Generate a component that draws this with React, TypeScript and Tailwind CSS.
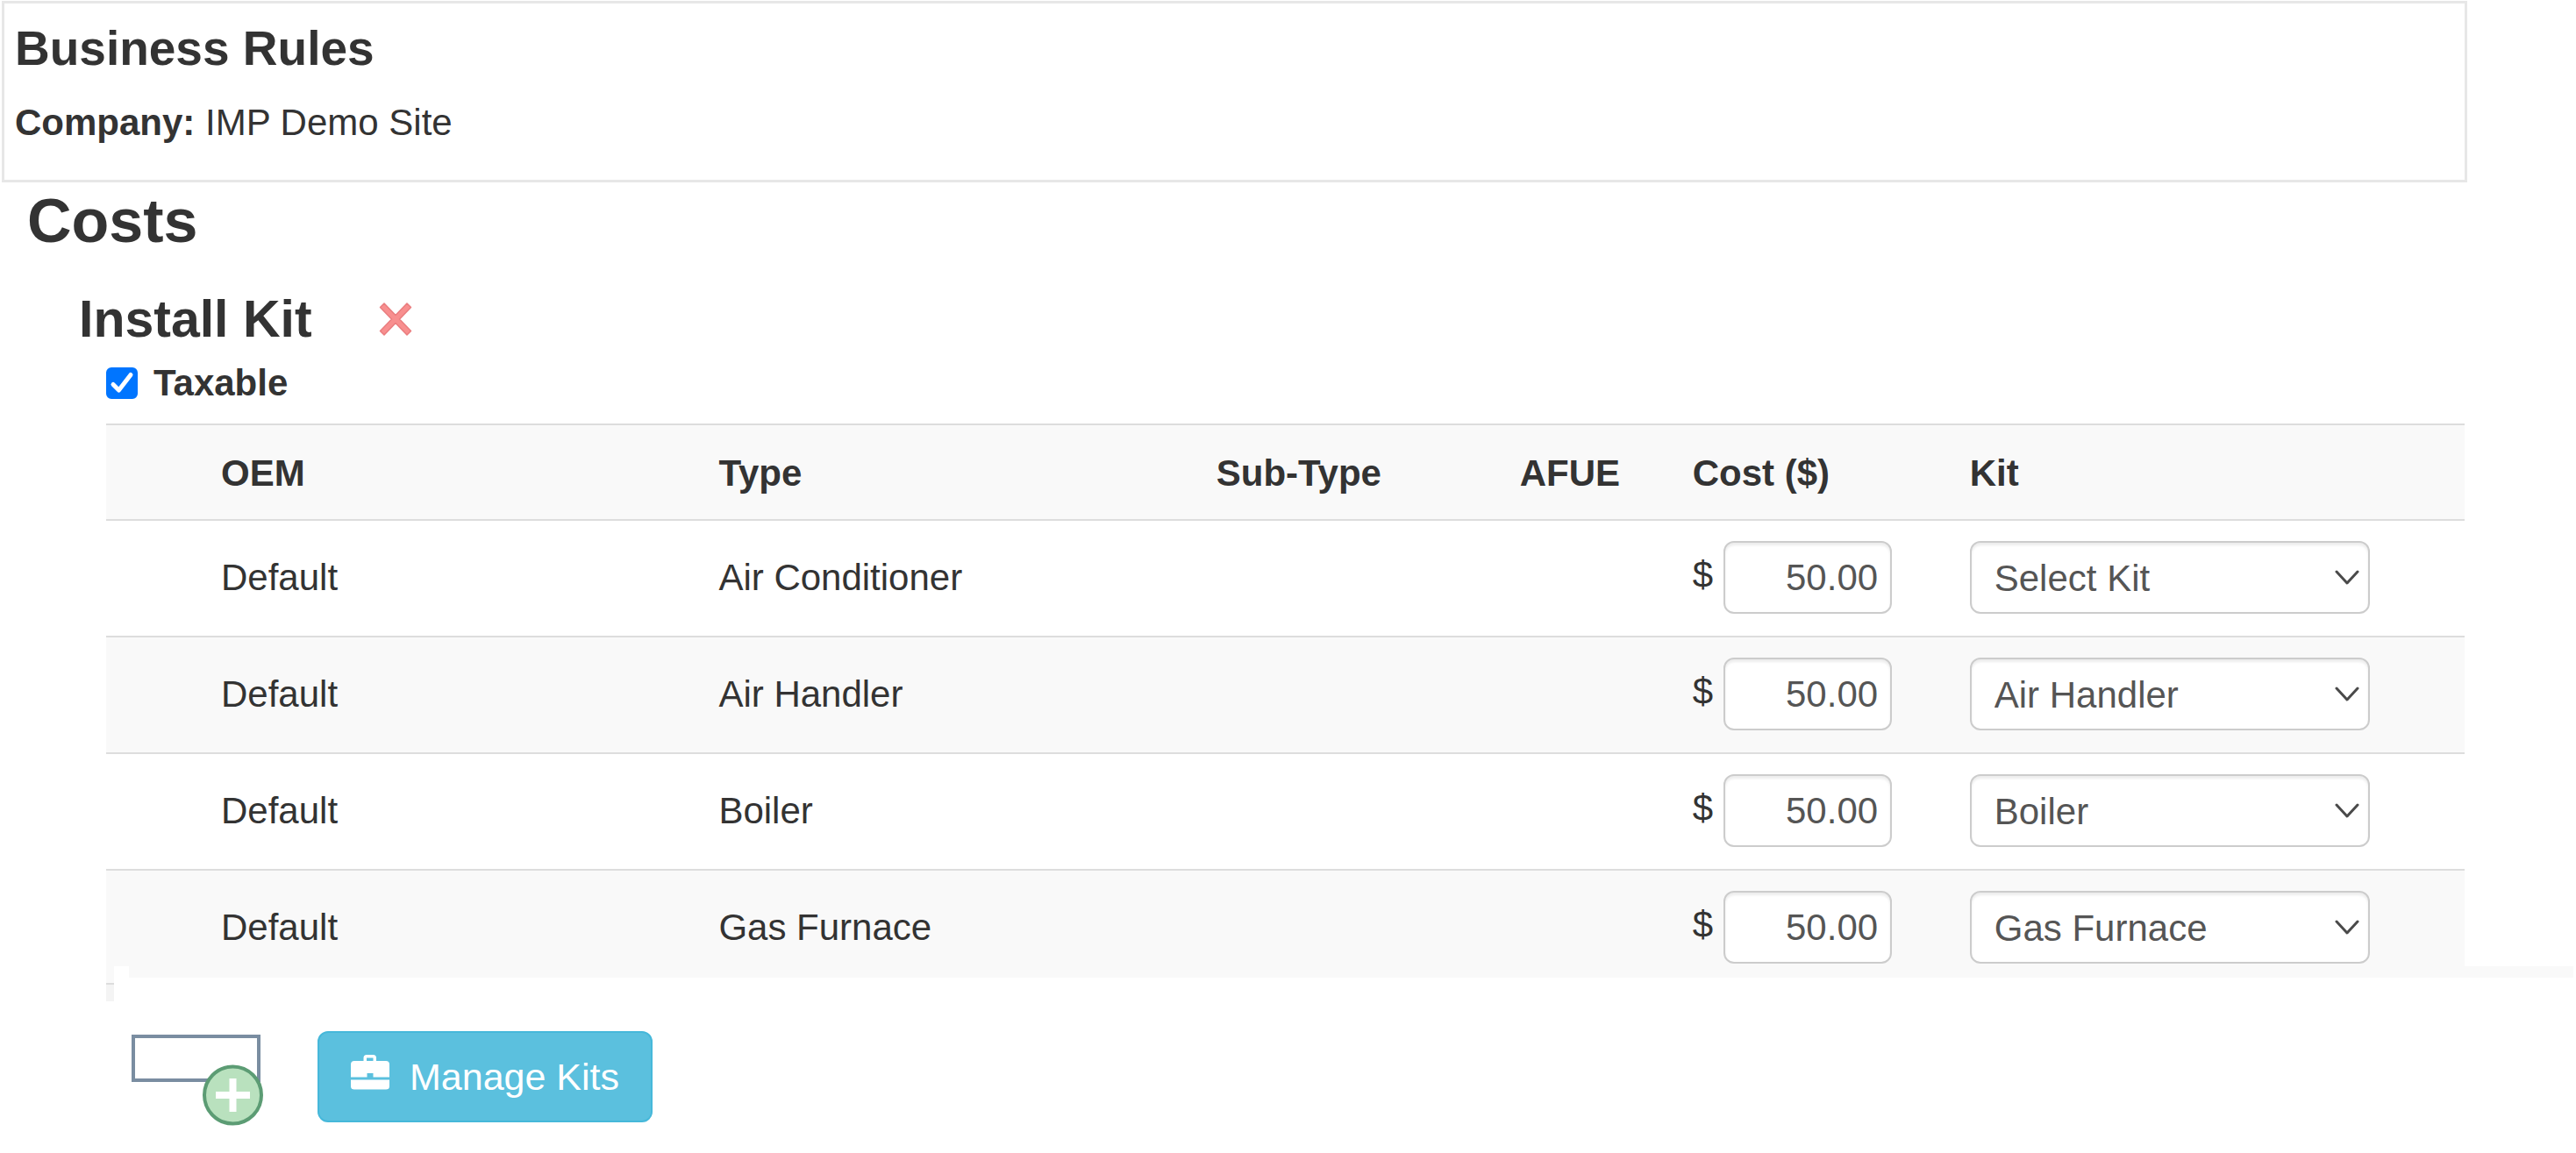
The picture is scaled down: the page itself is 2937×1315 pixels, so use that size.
import React from 'react';

const rows = [
  { oem: 'Default', type: 'Air Conditioner', cost: '50.00', kit: 'Select Kit' },
  { oem: 'Default', type: 'Air Handler', cost: '50.00', kit: 'Air Handler' },
  { oem: 'Default', type: 'Boiler', cost: '50.00', kit: 'Boiler' },
  { oem: 'Default', type: 'Gas Furnace', cost: '50.00', kit: 'Gas Furnace' },
];

const kits = ['Select Kit', 'Air Handler', 'Boiler', 'Gas Furnace'];

const fieldClass =
  'h-[83px] rounded-xl border-2 border-[#ccc] bg-white text-[#555] shadow-[inset_0_3px_3px_rgba(0,0,0,0.075)]';

function DeleteIcon() {
  return (
    <svg viewBox="0 0 38 40" className="h-10 w-[38px]" aria-hidden="true">
      <path
        d="M6 2 19 15.500 32 2 36.500 6.500 23.500 20 36.500 33.500 32 38 19 24.500 6 38 1.500 33.500 14.500 20 1.500 6.500Z"
        fill="#f88f8f"
        stroke="#ea7d7f"
        strokeWidth="1.5"
        strokeLinejoin="round"
      />
    </svg>
  );
}

function AddBoxIcon() {
  return (
    <svg viewBox="0 0 152 104" className="h-[104px] w-[152px]" aria-hidden="true">
      <rect x="2" y="2" width="143" height="50" fill="#fff" stroke="#7a8da1" strokeWidth="4" />
      <circle cx="115.500" cy="69" r="32.500" fill="#b9e1be" stroke="#5c9c74" strokeWidth="4" />
      <path d="M115.500 50v38M96 69h39" stroke="#fff" strokeWidth="8" />
    </svg>
  );
}

function BriefcaseIcon() {
  return (
    <svg viewBox="0 0 44 40" className="h-10 w-11" fill="#fff" aria-hidden="true">
      <path
        fillRule="evenodd"
        d="M14.500 7V3.500Q14.500 0 18 0h7.500Q29 0 29 3.500V7h11q4 0 4 4v14.500H25.500V21h-7v4.500H0V11q0-4 4-4ZM18 7h7.500V3.500H18Z"
      />
      <path d="M0 28.500h44V36q0 3.500-4 3.500H4q-4 0-4-3.500Z" />
    </svg>
  );
}

export default function App() {
  return (
    <main className="bg-white pt-px font-['Liberation_Sans',Arial,sans-serif] text-[42px] leading-[60px] text-[#333]">
      <header className="mr-[124px] ml-0.5 border-3 border-[#e7e7e7] px-3 pt-[21px] pb-[35px]">
        <h1 className="text-[55px] leading-[60px] font-bold">Business Rules</h1>
        <p className="mt-[25px]">
          <strong>Company:</strong> IMP Demo Site
        </p>
      </header>

      <h2 className="mt-1 ml-[31px] text-[70px] leading-[80px] font-bold">Costs</h2>

      <section>
        <div className="mt-9 ml-[90px] flex items-center gap-[76px]">
          <h3 className="text-[59px] leading-[72px] font-bold">Install Kit</h3>
          <button type="button" aria-label="Remove Install Kit">
            <DeleteIcon />
          </button>
        </div>

        <label className="mt-[7px] ml-[121px] flex w-fit items-center gap-[18px] font-bold">
          <span className="relative block h-9 w-9">
            <input
              type="checkbox"
              defaultChecked
              className="peer block h-9 w-9 appearance-none rounded-md border-2 border-[#767676] checked:border-[#0075ff] checked:bg-[#0075ff]"
            />
            <svg
              viewBox="0 0 36 36"
              className="pointer-events-none absolute inset-0 hidden h-9 w-9 peer-checked:block"
              fill="none"
              stroke="#fff"
              strokeWidth="5"
              strokeLinecap="round"
              strokeLinejoin="round"
              aria-hidden="true"
            >
              <path d="M8 19.500 14.500 26 28 8.500" />
            </svg>
          </span>
          Taxable
        </label>

        <div className="mt-4 mr-[127px] ml-[121px]">
          <table className="w-full table-fixed border-separate border-spacing-0 text-left">
            <colgroup>
              <col className="w-[131px]" />
              <col className="w-[21.1%]" />
              <col className="w-[21.1%]" />
              <col className="w-[346px]" />
              <col className="w-[197px]" />
              <col className="w-[316px]" />
              <col />
            </colgroup>
            <thead>
              <tr className="bg-[#f9f9f9] *:border-t-2 *:border-[#ddd] *:pt-[25px] *:pb-[22px]">
                <td />
                <th scope="col">OEM</th>
                <th scope="col">Type</th>
                <th scope="col">Sub-Type</th>
                <th scope="col">AFUE</th>
                <th scope="col">Cost ($)</th>
                <th scope="col">Kit</th>
              </tr>
            </thead>
            <tbody>
              {rows.map((row) => (
                <tr
                  key={row.type}
                  className="even:bg-[#f9f9f9] *:border-t-2 *:border-[#ddd] *:pt-[23px] *:pb-[25px] last:*:pb-[3px]"
                >
                  <td />
                  <td>{row.oem}</td>
                  <td>{row.type}</td>
                  <td />
                  <td />
                  <td>
                    <div className="flex items-center gap-3">
                      <span className="pb-1.5">$</span>
                      <input
                        type="text"
                        aria-label={`${row.type} cost`}
                        defaultValue={row.cost}
                        className={`w-[192px] px-3.5 text-right ${fieldClass}`}
                      />
                    </div>
                  </td>
                  <td>
                    <div className="relative w-[456px]">
                      <select
                        aria-label={`${row.type} kit`}
                        defaultValue={row.kit}
                        className={`block w-full appearance-none pt-0.5 pr-14 pl-[26px] ${fieldClass}`}
                      >
                        {kits.map((kit) => (
                          <option key={kit}>{kit}</option>
                        ))}
                      </select>
                      <svg
                        viewBox="0 0 28 18"
                        className="pointer-events-none absolute top-8 right-3 h-[18px] w-7"
                        fill="none"
                        stroke="#4a4a4a"
                        strokeWidth="3"
                        strokeLinecap="round"
                        strokeLinejoin="round"
                        aria-hidden="true"
                      >
                        <path d="M2 3 14 16 26 3" />
                      </svg>
                    </div>
                  </td>
                </tr>
              ))}
            </tbody>
          </table>
        </div>

        {/* cut edge under the last row */}
        <div className="mr-[3px] ml-[121px] flex h-[13px] gap-[17px]">
          <div className="w-[9px] bg-[#f9f9f9]" />
          <div className="flex-1 bg-[#f9f9f9]" />
        </div>
        <div className="ml-[121px] w-[9px]">
          <div className="h-1.5 bg-[#f9f9f9]" />
          <div className="h-[21px] border-t-2 border-[#ddd] bg-[#f4f4f4]" />
        </div>
      </section>

      <div className="mt-[34px] ml-[150px] flex items-start gap-[60px]">
        <button type="button" aria-label="Add cost" className="mt-1">
          <AddBoxIcon />
        </button>
        <button
          type="button"
          className="flex items-baseline gap-[23px] rounded-xl border-2 border-[#46b8da] bg-[#5bc0de] px-9 py-5 text-[43px] text-white"
        >
          <BriefcaseIcon />
          Manage Kits
        </button>
      </div>
    </main>
  );
}
